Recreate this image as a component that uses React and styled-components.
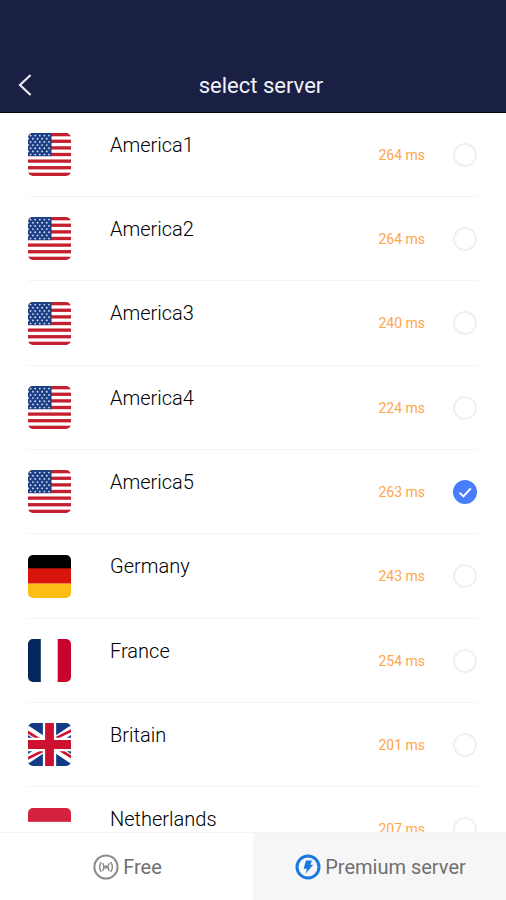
import React, { useState } from 'react';
import styled, { createGlobalStyle } from 'styled-components';

const servers = [
    { id: 1, name: 'America1', flag: 'us', ping: 264 },
    { id: 2, name: 'America2', flag: 'us', ping: 264 },
    { id: 3, name: 'America3', flag: 'us', ping: 240 },
    { id: 4, name: 'America4', flag: 'us', ping: 224 },
    { id: 5, name: 'America5', flag: 'us', ping: 263 },
    { id: 6, name: 'Germany', flag: 'de', ping: 243 },
    { id: 7, name: 'France', flag: 'fr', ping: 254 },
    { id: 8, name: 'Britain', flag: 'gb', ping: 201 },
    { id: 9, name: 'Netherlands', flag: 'nl', ping: 207 },
];

const starRows = [2.5, 5.6, 8.7, 11.8, 14.9, 18, 21.1];

const flags = {
    us: (
        <>
            <rect width="42" height="42" fill="#fff" />
            {[0, 1, 2, 3, 4, 5, 6].map((i) => (
                <rect key={i} y={i * 6.46} width="42" height="3.23" fill="#c4202f" />
            ))}
            <rect width="23" height="22.6" fill="#1c3f85" />
            {starRows.map((y, row) =>
                [2.5, 7, 11.5, 16, 20.5].map((x) => (
                    <circle key={`${x}-${y}`} cx={row % 2 ? x - 2.2 : x} cy={y} r="0.9" fill="#d5deee" />
                ))
            )}
        </>
    ),
    de: (
        <>
            <rect width="42" height="14" fill="#000" />
            <rect y="13" width="42" height="15" fill="#d8140c" />
            <rect y="28" width="42" height="14" fill="#fdbd14" />
        </>
    ),
    fr: (
        <>
            <rect width="42" height="42" fill="#fff" />
            <rect width="12.5" height="42" fill="#04265a" />
            <rect x="29" width="13" height="42" fill="#c8042c" />
        </>
    ),
    gb: (
        <>
            <rect width="42" height="42" fill="#123a85" />
            <path d="M-9 1 L51 41 M51 1 L-9 41" stroke="#fff" strokeWidth="8" />
            <path d="M-3 7 L21 22 M45 35 L21 20 M45 6 L21 18 M-3 36 L21 24" stroke="#cc1230" strokeWidth="2.6" />
            <path d="M21 0 V42 M0 21 H42" stroke="#fff" strokeWidth="13" />
            <path d="M21 0 V42 M0 21 H42" stroke="#cc1230" strokeWidth="8.6" />
        </>
    ),
    nl: (
        <>
            <rect width="42" height="42" fill="#fff" />
            <rect width="42" height="13.5" fill="#d4213d" />
            <rect y="28" width="42" height="14" fill="#1e4785" />
        </>
    ),
};

const FreeIcon = () => (
    <TabIcon viewBox="0 0 26 26" aria-hidden="true">
        <circle cx="13" cy="13" r="11.6" stroke="#8c8c8c" strokeWidth="2" />
        <circle cx="13" cy="13" r="1.7" fill="#8c8c8c" />
        <path
            d="M10 9.6 Q12 13 10 16.4 M16 9.6 Q14 13 16 16.4 M8 8.6 Q5.2 13 8 17.4 M18 8.6 Q20.8 13 18 17.4"
            stroke="#8c8c8c"
            strokeWidth="1.5"
            strokeLinecap="round"
        />
    </TabIcon>
);

const PremiumIcon = () => (
    <TabIcon viewBox="0 0 26 26" aria-hidden="true">
        <circle cx="13" cy="13" r="11" stroke="#1a78e0" strokeWidth="3" />
        <path d="M11 6.4 H17 L15.4 10.8 H18.2 L10.6 19.8 L12 14.8 H8.6 Z" fill="#1a78e0" />
    </TabIcon>
);

const ServerRow = ({ server, checked, onSelect }) => {
    const { name, flag, ping } = server;
    return (
        <Row>
            <Flag viewBox="0 0 42 42" aria-hidden="true">{flags[flag]}</Flag>
            <Name>{name}</Name>
            <Ping>{ping} ms</Ping>
            <RadioBox>
                <Radio type="radio" name="server" checked={checked} onChange={onSelect} />
                {checked && (
                    <Check viewBox="0 0 24 24" aria-hidden="true">
                        <path d="M6.5 12.6 L10.4 16.4 L17.8 8.4" />
                    </Check>
                )}
            </RadioBox>
        </Row>
    );
};

const App = () => {
    const [selected, setSelected] = useState(5);
    const [tab, setTab] = useState('premium');

    return (
        <Screen>
            <GlobalStyle />
            <Header>
                <BackButton type="button" aria-label="Back">
                    <svg width="14" height="22" viewBox="0 0 14 22" fill="none">
                        <path d="M12.6 1 L2 11 L12.6 21" stroke="#e8eaf2" strokeWidth="2.2" />
                    </svg>
                </BackButton>
                <Title>select server</Title>
            </Header>
            <List>
                {servers.map((server) => (
                    <ServerRow
                        key={server.id}
                        server={server}
                        checked={selected === server.id}
                        onSelect={() => setSelected(server.id)}
                    />
                ))}
            </List>
            <Tabs>
                <Tab type="button" $active={tab === 'free'} onClick={() => setTab('free')}>
                    <FreeIcon />
                    Free
                </Tab>
                <Tab type="button" $active={tab === 'premium'} onClick={() => setTab('premium')}>
                    <PremiumIcon />
                    Premium server
                </Tab>
            </Tabs>
        </Screen>
    );
};

export default App;

const GlobalStyle = createGlobalStyle`
    * {
        box-sizing: border-box;
    }
    body {
        margin: 0;
        background: #fff;
        font-family: Roboto, "Liberation Sans", sans-serif;
    }
`;

const Screen = styled.div`
    display: flex;
    flex-direction: column;
    height: 100vh;
`;

const Header = styled.header`
    display: grid;
    grid-template-columns: 48px 1fr 48px;
    align-items: center;
    padding: 58px 8px 0;
    height: 113px;
    flex-shrink: 0;
    background: #1a1f44;
    border-bottom: 1px solid #05060f;
`;

const BackButton = styled.button`
    display: flex;
    padding: 8px 10px;
    border: 0;
    background: none;
    cursor: pointer;
`;

const Title = styled.h1`
    margin: 0;
    padding-left: 16px;
    color: #f0f2f7;
    font-size: 22px;
    font-weight: 400;
    text-align: center;
`;

const List = styled.main`
    flex: 1;
    min-height: 0;
    padding: 0 28px;
    overflow-y: auto;
    scrollbar-width: none;
`;

const Row = styled.label`
    display: flex;
    align-items: center;
    height: 84px;
    border-bottom: 1px solid #f4f4f4;
    cursor: pointer;

    &:nth-child(3n) {
        height: 85px;
    }
`;

const Flag = styled.svg`
    width: 43px;
    height: 43px;
    border-radius: 5px;
    flex-shrink: 0;
`;

const Name = styled.span`
    flex: 1;
    align-self: flex-start;
    padding: 20px 0 0 39px;
    color: #000;
    font-size: 20px;
    font-weight: 300;
    line-height: 24px;
`;

const Ping = styled.span`
    color: #ffa64d;
    font-size: 14px;
`;

const RadioBox = styled.span`
    position: relative;
    display: flex;
    margin-left: 28px;
    padding-right: 1px;
`;

const Radio = styled.input`
    appearance: none;
    width: 24px;
    height: 24px;
    margin: 0;
    border: 2px solid #f0f0f0;
    border-radius: 50%;
    background: #fff;
    cursor: pointer;

    &:checked {
        border-color: #4a7dfb;
        background: #4a7dfb;
    }
`;

const Check = styled.svg`
    position: absolute;
    top: 0;
    left: 0;
    width: 24px;
    height: 24px;
    fill: none;
    stroke: #fff;
    stroke-width: 2;
    pointer-events: none;
`;

const Tabs = styled.nav`
    display: flex;
    flex-shrink: 0;
    height: 68px;
`;

const Tab = styled.button`
    flex: 1;
    display: flex;
    align-items: center;
    justify-content: center;
    gap: 4px;
    padding: 0 0 0 2px;
    border: 0;
    border-top: 1px solid #f5f5f5;
    background: ${({ $active }) => ($active ? '#f6f6f6' : '#fff')};
    color: #707070;
    font-family: inherit;
    font-size: 20px;
    cursor: pointer;
`;

const TabIcon = styled.svg`
    width: 26px;
    height: 26px;
    fill: none;
`;
